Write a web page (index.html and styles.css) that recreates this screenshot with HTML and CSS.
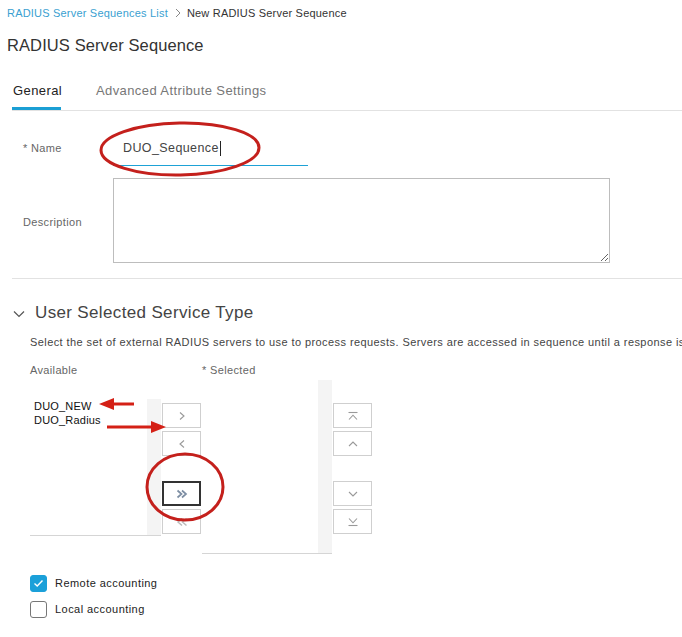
FILE: index.html
```html
<!DOCTYPE html>
<html>
<head>
<meta charset="utf-8">
<link rel="stylesheet" href="styles.css">
</head>
<body>
<div class="page">
  <div class="crumbs"><span class="crumb-link">RADIUS Server Sequences List</span><svg class="crumb-sep" width="8" height="10" viewBox="0 0 8 10"><polyline points="2,1 6,5 2,9" fill="none" stroke="#888" stroke-width="1"/></svg><span class="crumb-cur">New RADIUS Server Sequence</span></div>
  <h1 class="title">RADIUS Server Sequence</h1>
  <div class="tabs">
    <div class="tab active">General</div>
    <div class="tab">Advanced Attribute Settings</div>
  </div>

  <div class="form">
    <div class="row name-row">
      <label class="lbl">* Name</label>
      <div class="name-input"><span class="name-val">DUO_Sequence</span><span class="caret"></span></div>
    </div>
    <div class="row desc-row">
      <label class="lbl">Description</label>
      <textarea class="desc"></textarea>
    </div>
  </div>
  <div class="divider"></div>

  <div class="section-head">
    <svg class="chev" width="12" height="8" viewBox="0 0 12 8"><polyline points="1,1.5 6,6.5 11,1.5" fill="none" stroke="#555" stroke-width="1.2"/></svg>
    <span>User Selected Service Type</span>
  </div>
  <div class="help">Select the set of external RADIUS servers to use to process requests. Servers are accessed in sequence until a response is received.</div>

  <div class="lists-labels">
    <span class="lab-avail">Available</span>
    <span class="lab-sel">* Selected</span>
  </div>

  <div class="dual">
    <div class="avail">
      <div class="list-body">
        <div class="item">DUO_NEW</div>
        <div class="item">DUO_Radius</div>
      </div>
      <div class="track track-a"></div>
    </div>
    <div class="btns">
      <div class="btn"><svg width="10" height="10" viewBox="0 0 10 10"><polyline points="3,1.5 7,5 3,8.5" fill="none" stroke="#999" stroke-width="1.1"/></svg></div>
      <div class="btn"><svg width="10" height="10" viewBox="0 0 10 10"><polyline points="7,1.5 3,5 7,8.5" fill="none" stroke="#999" stroke-width="1.1"/></svg></div>
      <div class="btn gap btn-dark"><svg width="14" height="10" viewBox="0 0 14 10"><polyline points="2.5,1.5 6.5,5 2.5,8.5" fill="none" stroke="#7d8ea3" stroke-width="1.7"/><polyline points="7,1.5 11,5 7,8.5" fill="none" stroke="#7d8ea3" stroke-width="1.7"/></svg></div>
      <div class="btn"><svg width="14" height="10" viewBox="0 0 14 10"><polyline points="7,1.5 3,5 7,8.5" fill="none" stroke="#bbb" stroke-width="1.5"/><polyline points="11.5,1.5 7.5,5 11.5,8.5" fill="none" stroke="#bbb" stroke-width="1.5"/></svg></div>
    </div>
    <div class="sel">
      <div class="list-body"></div>
      <div class="track track-s"></div>
    </div>
    <div class="btns">
      <div class="btn"><svg width="12" height="10" viewBox="0 0 12 10"><line x1="1.5" y1="1.5" x2="10.5" y2="1.5" stroke="#999" stroke-width="1.1"/><polyline points="2,8.5 6,4.2 10,8.5" fill="none" stroke="#999" stroke-width="1.1"/></svg></div>
      <div class="btn"><svg width="12" height="10" viewBox="0 0 12 10"><polyline points="2,7 6,3 10,7" fill="none" stroke="#999" stroke-width="1.1"/></svg></div>
      <div class="btn gap"><svg width="12" height="10" viewBox="0 0 12 10"><polyline points="2,3 6,7 10,3" fill="none" stroke="#999" stroke-width="1.1"/></svg></div>
      <div class="btn"><svg width="12" height="10" viewBox="0 0 12 10"><polyline points="2,1.5 6,5.8 10,1.5" fill="none" stroke="#999" stroke-width="1.1"/><line x1="1.5" y1="8.5" x2="10.5" y2="8.5" stroke="#999" stroke-width="1.1"/></svg></div>
    </div>
  </div>

  <div class="checks">
    <div class="check"><span class="box on"><svg width="11" height="9" viewBox="0 0 11 9"><polyline points="1.5,4.5 4.2,7 9.5,1.5" fill="none" stroke="#fff" stroke-width="1.4"/></svg></span><span class="check-lbl">Remote accounting</span></div>
    <div class="check"><span class="box"></span><span class="check-lbl">Local accounting</span></div>
  </div>

  <svg class="marks" width="682" height="637" viewBox="0 0 682 637">
    <ellipse cx="180" cy="149" rx="79" ry="26" fill="none" stroke="#c4201c" stroke-width="3" transform="rotate(-1 180 149)"/>
    <ellipse cx="185" cy="487" rx="38" ry="33" fill="none" stroke="#c4201c" stroke-width="3"/>
    <line x1="134" y1="404" x2="110" y2="404" stroke="#d42016" stroke-width="3"/>
    <polygon points="99,404 114,398 114,410" fill="#d42016"/>
    <line x1="107" y1="427" x2="154" y2="427" stroke="#d42016" stroke-width="3"/>
    <polygon points="166,427 151,421 151,433" fill="#d42016"/>
  </svg>
</div>
</body>
</html>
```

FILE: styles.css
```css
* { box-sizing: border-box; }
html, body { margin: 0; padding: 0; background: #fff; }
body { font-family: "Liberation Sans", Arial, sans-serif; color: #333; }
.page { position: relative; width: 682px; height: 637px; overflow: hidden; }

.crumbs { height: 26px; padding-left: 7px; display: flex; align-items: center; font-size: 11px; letter-spacing: 0.2px; }
.crumb-link { color: #3a9fd1; }
.crumb-sep { margin: 0 5px 0 6px; }
.crumb-cur { color: #333; }

.title { margin: 0; padding-left: 7px; height: 38px; line-height: 38px; font-size: 16.5px; font-weight: 400; color: #333; letter-spacing: 0.1px; }

.tabs { margin-left: 12px; display: flex; border-bottom: 1px solid #e2e2e2; height: 47px; }
.tab { padding-top: 19px; height: 46px; font-size: 13px; line-height: 16px; color: #777; letter-spacing: 0.4px; }
.tab.active { padding-left: 1px; padding-right: 0; color: #222; font-weight: 500; border-bottom: 3px solid #1b9fd4; margin-right: 35px; width: 49px; }

.form { padding-top: 12px; }
.row { display: flex; }
.lbl { width: 113px; padding-left: 23px; font-size: 11px; color: #666; letter-spacing: 0.35px; }
.name-row { height: 43px; align-items: center; }
.name-row .lbl { margin-top: 6px; }
.name-input { width: 195px; height: 30px; margin-top: 12px; border-bottom: 1.5px solid #1ea2d6; padding-left: 10px; display: flex; align-items: center; padding-bottom: 4px; }
.name-val { font-size: 12.5px; color: #444; letter-spacing: 0.4px; }
.caret { display: inline-block; width: 1px; height: 15px; background: #222; margin-left: 1px; }
.desc-row { align-items: center; margin-top: 12px; }
.desc-row .lbl { margin-top: 3px; }
.desc { width: 497px; height: 85px; border: 1px solid #bdbdbd; border-radius: 0; resize: vertical; font-family: inherit; margin: 0; }

.divider { margin: 15px 0 0 12px; border-top: 1px solid #e2e2e2; }

.section-head { display: flex; align-items: center; height: 30px; margin-top: 19px; padding-left: 13px; font-size: 17px; color: #444; letter-spacing: 0.35px; }
.chev { margin-right: 10px; margin-top: 1px; }
.help { padding-left: 30px; margin-top: 4px; height: 20px; line-height: 20px; font-size: 11px; color: #444; white-space: nowrap; overflow: hidden; letter-spacing: 0.42px; }
.lists-labels { display: flex; padding-left: 30px; height: 16px; line-height: 16px; margin-top: 10px; font-size: 11px; color: #666; letter-spacing: 0.35px; }
.lab-avail { width: 172px; }

.dual { display: flex; align-items: flex-start; padding-left: 30px; margin-top: 2px; }
.avail { width: 131px; height: 156px; padding-top: 17px; display: flex; }
.avail .list-body { flex: 1; border-bottom: 1px solid #d5d5d5; padding: 2px 0 0 4px; }
.item { font-size: 11px; line-height: 14px; color: #111; letter-spacing: 0.2px; }
.track { width: 14px; background: #f4f4f4; }
.track-a { margin-top: 2px; }
.avail .track { border-bottom: 1px solid #d5d5d5; }

.btns { width: 41px; padding: 23px 0 0 1px; display: flex; flex-direction: column; }
.btn { width: 39px; height: 25px; border: 1px solid #cfcfcf; margin-bottom: 3px; display: flex; align-items: center; justify-content: center; background: #fff; }
.btn.gap { margin-top: 22px; }
.btn-dark { border: 2px solid #333; }

.sel { width: 130px; height: 174px; display: flex; border-bottom: 1px solid #d5d5d5; }
.sel .list-body { flex: 1; }

.checks { padding-left: 30px; margin-top: 16px; }
.check { display: flex; align-items: center; height: 26px; }
.box { width: 17px; height: 17px; border: 1.5px solid #777; border-radius: 3px; display: flex; align-items: center; justify-content: center; margin-right: 8px; }
.box.on { background: #1ba0d9; border-color: #1ba0d9; }
.check-lbl { font-size: 11px; color: #222; font-weight: 500; letter-spacing: 0.45px; }

.marks { position: absolute; left: 0; top: 0; pointer-events: none; }
```
